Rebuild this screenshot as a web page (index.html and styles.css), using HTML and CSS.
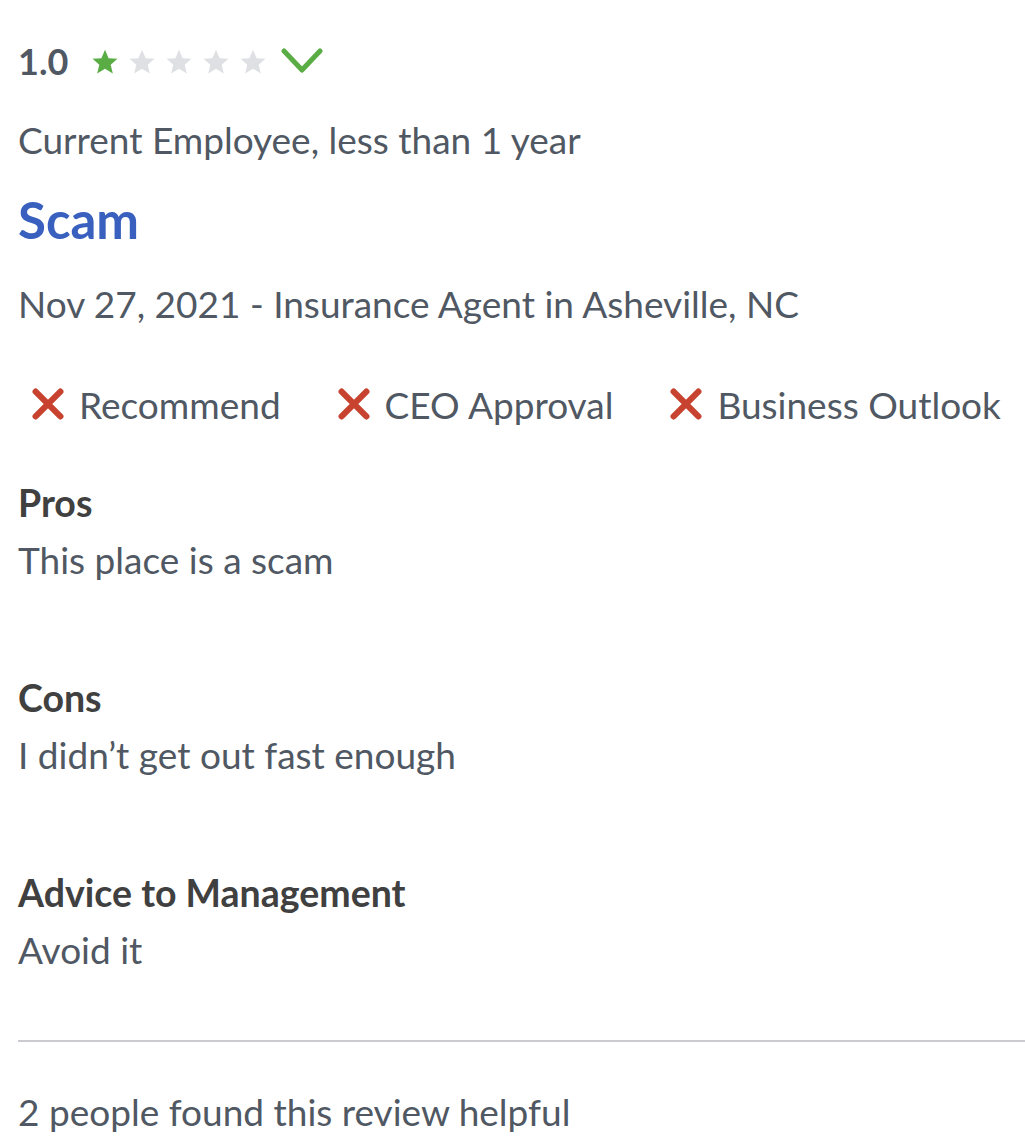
FILE: index.html
```html
<!DOCTYPE html>
<html lang="en">
<head>
<meta charset="utf-8">
<title>Review</title>
<link rel="stylesheet" href="styles.css">
</head>
<body>
<div class="review">
  <div class="rating">
    <span class="score">1.0</span>
    <span class="stars">
      <svg class="star on" viewBox="0 0 24 24"><path d="M12 1.5l3.1 7.2 7.6.6-5.8 5 1.8 7.5L12 17.8l-6.7 4 1.8-7.5-5.8-5 7.6-.6z"/></svg>
      <svg class="star" viewBox="0 0 24 24"><path d="M12 1.5l3.1 7.2 7.6.6-5.8 5 1.8 7.5L12 17.8l-6.7 4 1.8-7.5-5.8-5 7.6-.6z"/></svg>
      <svg class="star" viewBox="0 0 24 24"><path d="M12 1.5l3.1 7.2 7.6.6-5.8 5 1.8 7.5L12 17.8l-6.7 4 1.8-7.5-5.8-5 7.6-.6z"/></svg>
      <svg class="star" viewBox="0 0 24 24"><path d="M12 1.5l3.1 7.2 7.6.6-5.8 5 1.8 7.5L12 17.8l-6.7 4 1.8-7.5-5.8-5 7.6-.6z"/></svg>
      <svg class="star" viewBox="0 0 24 24"><path d="M12 1.5l3.1 7.2 7.6.6-5.8 5 1.8 7.5L12 17.8l-6.7 4 1.8-7.5-5.8-5 7.6-.6z"/></svg>
    </span>
    <svg class="chevron" viewBox="0 0 42 26"><path d="M3 3l18 19L39 3"/></svg>
  </div>
  <div class="status">Current Employee, less than 1 year</div>
  <h2 class="title">Scam</h2>
  <div class="meta">Nov 27, 2021 - Insurance Agent in Asheville, NC</div>
  <div class="checks">
    <div class="check">
      <svg class="xicon" viewBox="0 0 32 32"><path d="M5 5l22 22M27 5L5 27"/></svg>
      <span>Recommend</span>
    </div>
    <div class="check">
      <svg class="xicon" viewBox="0 0 32 32"><path d="M5 5l22 22M27 5L5 27"/></svg>
      <span>CEO Approval</span>
    </div>
    <div class="check">
      <svg class="xicon" viewBox="0 0 32 32"><path d="M5 5l22 22M27 5L5 27"/></svg>
      <span>Business Outlook</span>
    </div>
  </div>
  <div class="section first">
    <h3 class="heading">Pros</h3>
    <p class="body">This place is a scam</p>
  </div>
  <div class="section">
    <h3 class="heading">Cons</h3>
    <p class="body">I didn’t get out fast enough</p>
  </div>
  <div class="section">
    <h3 class="heading">Advice to Management</h3>
    <p class="body">Avoid it</p>
  </div>
  <hr class="divider">
  <div class="helpful">2 people found this review helpful</div>
</div>
</body>
</html>
```

FILE: styles.css
```css
html, body {
  margin: 0;
  padding: 0;
  background: #ffffff;
}
body {
  font-family: Lato, "Open Sans", "Liberation Sans", sans-serif;
  color: #505863;
  font-size: 37px;
}
.review {
  padding: 37px 0 0 18px;
}
.rating {
  display: flex;
  align-items: center;
  height: 48px;
}
.score {
  font-weight: 700;
  font-size: 36px;
  line-height: 48px;
  color: #505863;
  width: 73px;
}
.stars {
  display: flex;
  gap: 9px;
  margin-top: 2px;
}
.star {
  width: 28px;
  height: 28px;
  fill: #dfe0e4;
  display: block;
}
.star.on {
  fill: #5aad45;
}
.chevron {
  width: 42px;
  height: 26px;
  margin-left: 14px;
  margin-top: -1px;
  fill: none;
  stroke: #5aad45;
  stroke-width: 5;
  stroke-linecap: round;
  stroke-linejoin: round;
  display: block;
}
.status {
  margin-top: 31px;
  line-height: 48px;
}
.title {
  margin: 28px 0 0;
  font-size: 51px;
  font-weight: 700;
  line-height: 56px;
  color: #3a60bf;
}
.meta {
  margin-top: 32px;
  line-height: 48px;
}
.checks {
  margin-top: 52px;
  display: flex;
  height: 48px;
  align-items: center;
  padding-left: 12px;
  gap: 55px;
}
.check {
  display: flex;
  align-items: center;
  gap: 13px;
}
.xicon {
  width: 36px;
  height: 36px;
  fill: none;
  stroke: #c8432f;
  stroke-width: 5.5;
  stroke-linecap: round;
  display: block;
}
.section {
  margin-top: 90px;
}
.section.first {
  margin-top: 51px;
}
.heading {
  margin: 0 0 9px;
  font-size: 37.5px;
  font-weight: 700;
  line-height: 48px;
  color: #404040;
}
.body {
  margin: 0;
  line-height: 48px;
}
.divider {
  margin: 66px 0 0;
  border: 0;
  border-top: 2px solid #cbcccf;
  height: 0;
}
.helpful {
  margin-top: 46px;
  line-height: 48px;
}
```
